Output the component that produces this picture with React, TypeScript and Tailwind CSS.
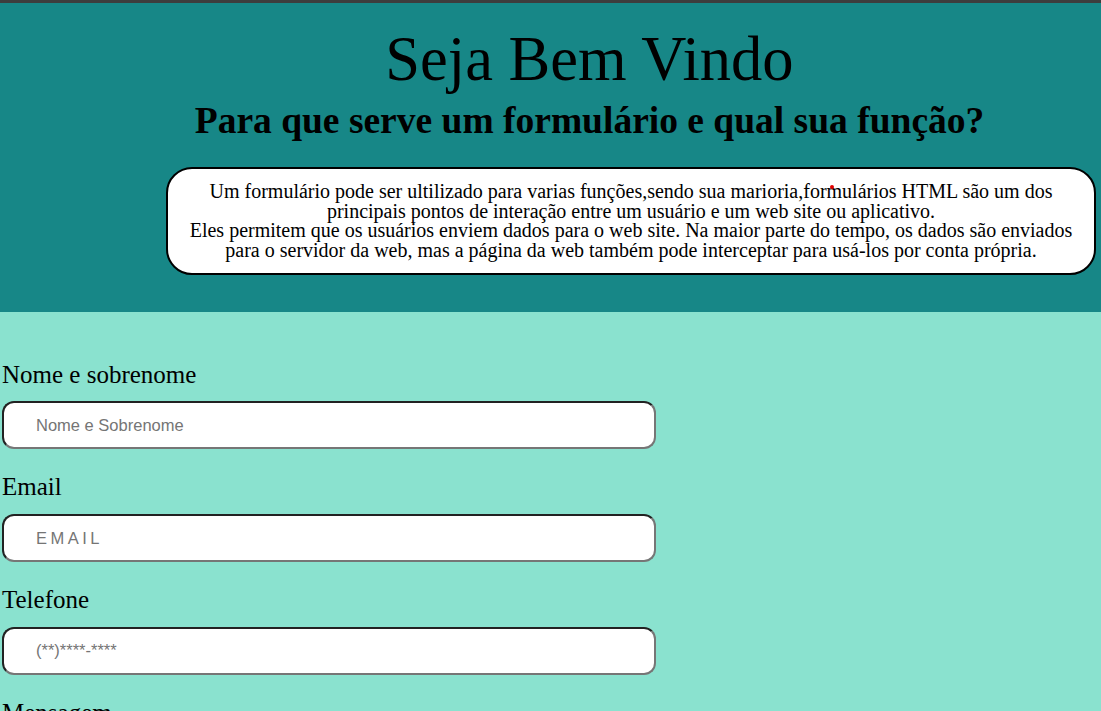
import React from 'react';

const fields = [
  { label: 'Nome e sobrenome', placeholder: 'Nome e Sobrenome', extra: '' },
  { label: 'Email', placeholder: 'EMAIL', extra: 'tracking-[3.5px]' },
  { label: 'Telefone', placeholder: '(**)****-****', extra: '' },
];

export default function App() {
  return (
    <div className="min-h-screen bg-[#8ae2cf] font-['Liberation_Serif',serif] text-black">
      <div className="h-[3px] bg-[#3d3d3d]" />

      {/* Header */}
      <header className="bg-[#178787] pt-[25px] pb-[37px]">
        <div className="pl-[78px] text-center">
          <h1 className="text-[62.5px] leading-[62px] font-normal">Seja Bem Vindo</h1>
          <h2 className="mt-[13px] text-[37.5px] leading-[36px] font-bold">
            Para que serve um formulário e qual sua função?
          </h2>
        </div>
        <div className="relative mt-[28px] ml-[166px] mr-[5px] rounded-[26px] border-2 border-black bg-white px-[10px] pt-[13px] pb-[12px] text-center text-[20px] leading-[19.7px] whitespace-nowrap">
          <span className="absolute left-[662px] top-[16px] h-[4px] w-[4px] rounded-full bg-[#e00000]" />
          Um formulário pode ser ultilizado para varias funções,sendo sua marioria,formulários HTML são um dos
          <br />
          principais pontos de interação entre um usuário e um web site ou aplicativo.
          <br />
          Eles permitem que os usuários enviem dados para o web site. Na maior parte do tempo, os dados são enviados
          <br />
          para o servidor da web, mas a página da web também pode interceptar para usá-los por conta própria.
        </div>
      </header>

      {/* Form */}
      <form className="px-[2px] pt-[49px] pb-10">
        {fields.map((f) => (
          <div key={f.label} className="mb-[24px]">
            <label className="block text-[25px] leading-[27.6px]">{f.label}</label>
            <input
              type="text"
              placeholder={f.placeholder}
              className={`mt-[13px] block h-[48px] w-[654px] rounded-[12px] border-2 border-t-[#222] border-l-[#222] border-b-[#767676] border-r-[#767676] bg-white pl-[32px] font-['Liberation_Sans',Arial,sans-serif] text-[16.5px] outline-none placeholder:text-[#757575] ${f.extra}`}
            />
          </div>
        ))}
        <div>
          <label className="block text-[25px] leading-[27.6px]">Mensagem</label>
          <textarea
            placeholder="Mensagem"
            className="mt-[13px] block h-[120px] w-[654px] rounded-[12px] border-2 border-t-[#222] border-l-[#222] border-b-[#767676] border-r-[#767676] bg-white pl-[32px] pt-3 font-['Liberation_Sans',Arial,sans-serif] text-[16.5px] outline-none placeholder:text-[#757575]"
          />
        </div>
      </form>
    </div>
  );
}
